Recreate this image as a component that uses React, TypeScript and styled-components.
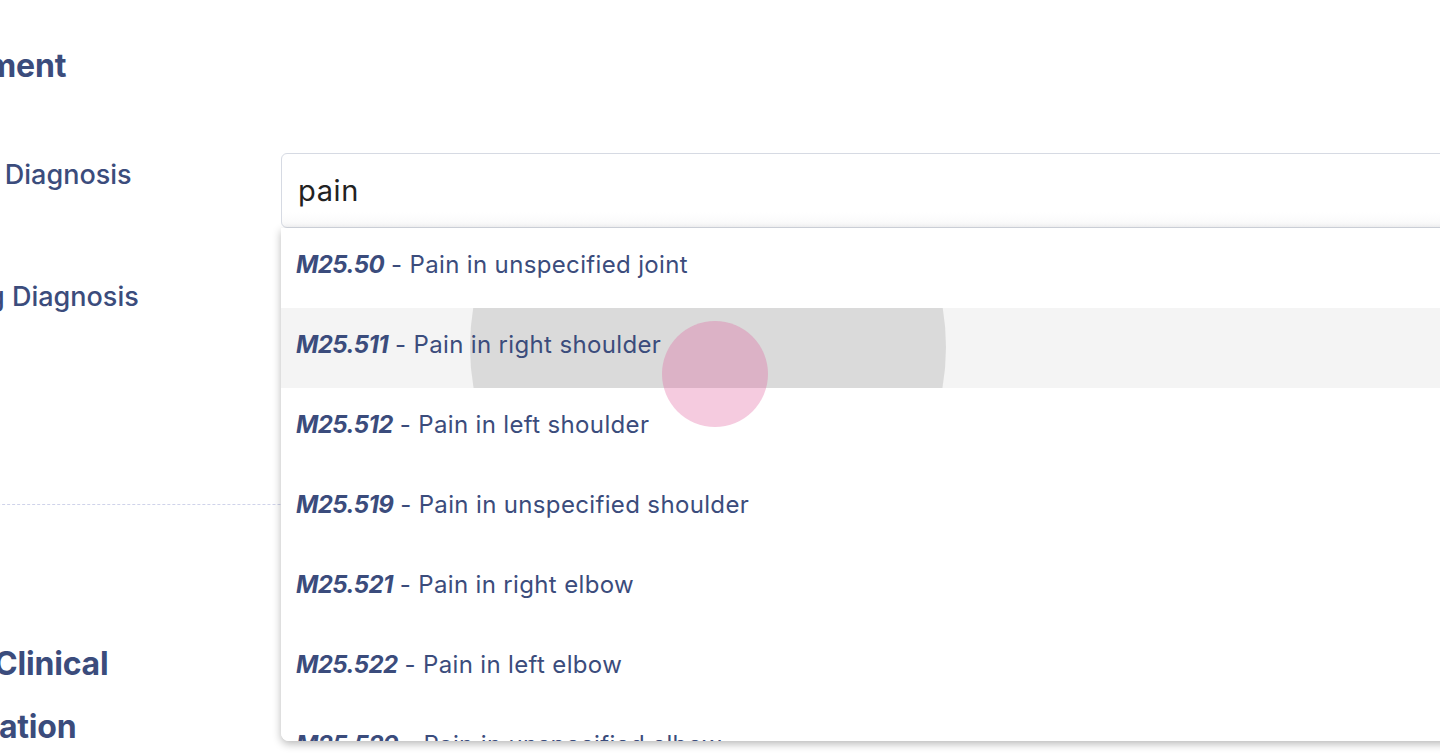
import React from 'react';
import styled, { createGlobalStyle } from 'styled-components';

const GlobalStyle = createGlobalStyle`
  html, body {
    margin: 0;
    padding: 0;
    background: #ffffff;
    overflow: hidden;
  }
  body {
    font-family: Inter, 'Noto Sans', sans-serif;
  }
`;

const navy = '#3b4c7c';

const StyledPage = styled.div`
  position: relative;
  width: 1440px;
  height: 753px;
  overflow: hidden;
  background: #ffffff;
`;

const StyledForm = styled.div`
  display: flex;
  flex-direction: column;
  margin-left: -103px;
  width: 1700px;
`;

const StyledHeading = styled.h2<{ $indent: number; $top: number }>`
  margin: 0 0 0 ${({ $indent }) => $indent}px;
  padding-top: ${({ $top }) => $top}px;
  color: ${navy};
  font-size: 32px;
  font-weight: 700;
  line-height: 63px;
  letter-spacing: -0.2px;
`;

const StyledFieldRow = styled.div<{ $gap: number }>`
  display: grid;
  grid-template-columns: 384px 1fr;
  margin-top: ${({ $gap }) => $gap}px;
  position: relative;
`;

const StyledLabel = styled.label`
  color: ${navy};
  font-size: 27px;
  font-weight: 500;
  line-height: 32px;
  padding-top: 6px;
`;

const StyledInputBox = styled.div`
  box-sizing: border-box;
  height: 75px;
  border: 1px solid #d6dae3;
  border-radius: 6px;
  background: linear-gradient(#ffffff 80%, #f8f8f9);
  display: flex;
  align-items: center;
  padding: 0 16px;
  font-size: 29px;
  letter-spacing: 0.6px;
  color: #222222;
`;

const StyledDivider = styled.div`
  margin-top: 154px;
  border-top: 1px dashed #cfd3ea;
  width: 1600px;
`;

const StyledDropdown = styled.ul`
  position: absolute;
  left: 384px;
  top: 75px;
  z-index: 2;
  margin: 0;
  padding: 0;
  list-style: none;
  width: 1300px;
  height: 513px;
  overflow: hidden;
  background: #ffffff;
  border-radius: 0 0 8px 8px;
  box-shadow: 0 3px 9px rgba(0, 0, 0, 0.28);
`;

const StyledOption = styled.li<{ $active?: boolean }>`
  position: relative;
  overflow: hidden;
  box-sizing: border-box;
  height: 80px;
  display: flex;
  align-items: center;
  padding: 0 15px 8px;
  background: ${({ $active }) => ($active ? '#f4f4f4' : '#ffffff')};
  color: ${navy};
  font-size: 24px;
  letter-spacing: 0.35px;
  font-weight: 400;
  white-space: nowrap;
`;

const StyledCode = styled.span`
  font-weight: 700;
  font-style: italic;
  letter-spacing: -0.6px;
  margin-right: 7px;
`;

const StyledRipple = styled.span`
  position: absolute;
  left: 189px;
  top: -199px;
  width: 476px;
  height: 476px;
  border-radius: 50%;
  background: rgba(0, 0, 0, 0.105);
  pointer-events: none;
`;

const StyledOptionText = styled.span`
  position: relative;
`;

const StyledTouch = styled.div`
  position: absolute;
  left: 662px;
  top: 321px;
  width: 106px;
  height: 106px;
  border-radius: 50%;
  background: rgba(224, 93, 155, 0.32);
  z-index: 5;
  pointer-events: none;
`;

const options = [
  { code: 'M25.50', name: 'Pain in unspecified joint' },
  { code: 'M25.511', name: 'Pain in right shoulder', active: true },
  { code: 'M25.512', name: 'Pain in left shoulder' },
  { code: 'M25.519', name: 'Pain in unspecified shoulder' },
  { code: 'M25.521', name: 'Pain in right elbow' },
  { code: 'M25.522', name: 'Pain in left elbow' },
  { code: 'M25.529', name: 'Pain in unspecified elbow' },
];

const App = () => {
  return (
    <>
      <GlobalStyle />
      <StyledPage>
        <StyledForm>
          <StyledHeading $indent={-23} $top={34}>
            Assessment
          </StyledHeading>
          <StyledFieldRow $gap={56}>
            <StyledLabel>Primary Diagnosis</StyledLabel>
            <StyledInputBox>pain</StyledInputBox>
            <StyledDropdown>
              {options.map((option) => (
                <StyledOption key={option.code} $active={option.active}>
                  {option.active && <StyledRipple />}
                  <StyledOptionText>
                    <StyledCode>{option.code}</StyledCode>- {option.name}
                  </StyledOptionText>
                </StyledOption>
              ))}
            </StyledDropdown>
          </StyledFieldRow>
          <StyledFieldRow $gap={47}>
            <StyledLabel>Working Diagnosis</StyledLabel>
            <StyledInputBox />
          </StyledFieldRow>
          <StyledDivider />
          <StyledHeading $indent={-58} $top={127}>
            Objective Clinical
            <br />
            Documentation
          </StyledHeading>
        </StyledForm>
        <StyledTouch />
      </StyledPage>
    </>
  );
};

export default App;
